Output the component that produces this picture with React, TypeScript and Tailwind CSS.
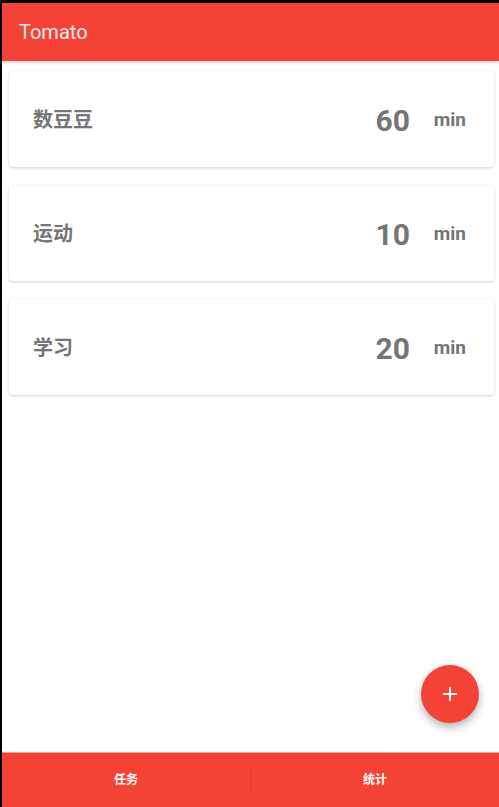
import React from "react";

const tasks = [
  { name: "数豆豆", min: 60 },
  { name: "运动", min: 10 },
  { name: "学习", min: 20 },
];

export default function App() {
  return (
    <div
      className="w-[499px] h-[807px] bg-black pt-[3px] pl-[2px] flex flex-col overflow-hidden"
      style={{ fontFamily: 'Roboto, "Noto Sans CJK SC", sans-serif' }}
    >
      <div className="relative flex-1 flex flex-col bg-white">
        <div className="h-[58px] bg-[#f44336] flex items-center pl-[17px] shadow-[0_2px_3px_rgba(0,0,0,0.15)] z-10">
          <span className="text-[20px] text-white/90">Tomato</span>
        </div>
        <div className="flex-1 flex flex-col gap-[18px] pt-[10px] pl-[7px] pr-[5px]">
          {tasks.map((t) => (
            <div
              key={t.name}
              className="h-[96px] rounded-[4px] bg-white shadow-[0_1px_3px_rgba(0,0,0,0.18)] flex items-center pl-[24px] pr-[28px] pt-[2px]"
            >
              <span className="flex-1 text-[20px] font-bold text-[#757575]">{t.name}</span>
              <span className="text-[30px] font-bold text-[#757575] mr-[24px]">{t.min}</span>
              <span className="text-[19px] font-bold text-[#757575]">min</span>
            </div>
          ))}
        </div>
        <div className="absolute right-[20px] bottom-[84px] w-[58px] h-[58px] rounded-full bg-[#f44336] shadow-[0_4px_8px_rgba(0,0,0,0.3)] flex items-center justify-center">
          <svg width="16" height="16" viewBox="0 0 16 16">
            <path d="M8 1v14M1 8h14" stroke="white" strokeWidth="2" />
          </svg>
        </div>
        <div className="h-[55px] bg-[#f44336] border-t border-[#f8a09a] flex items-center">
          <div className="flex-1 flex items-center justify-center text-[12px] font-bold text-white">任务</div>
          <div className="w-px h-[32px] bg-[#e03a2f]" />
          <div className="flex-1 flex items-center justify-center text-[12px] font-bold text-white">统计</div>
        </div>
      </div>
    </div>
  );
}
